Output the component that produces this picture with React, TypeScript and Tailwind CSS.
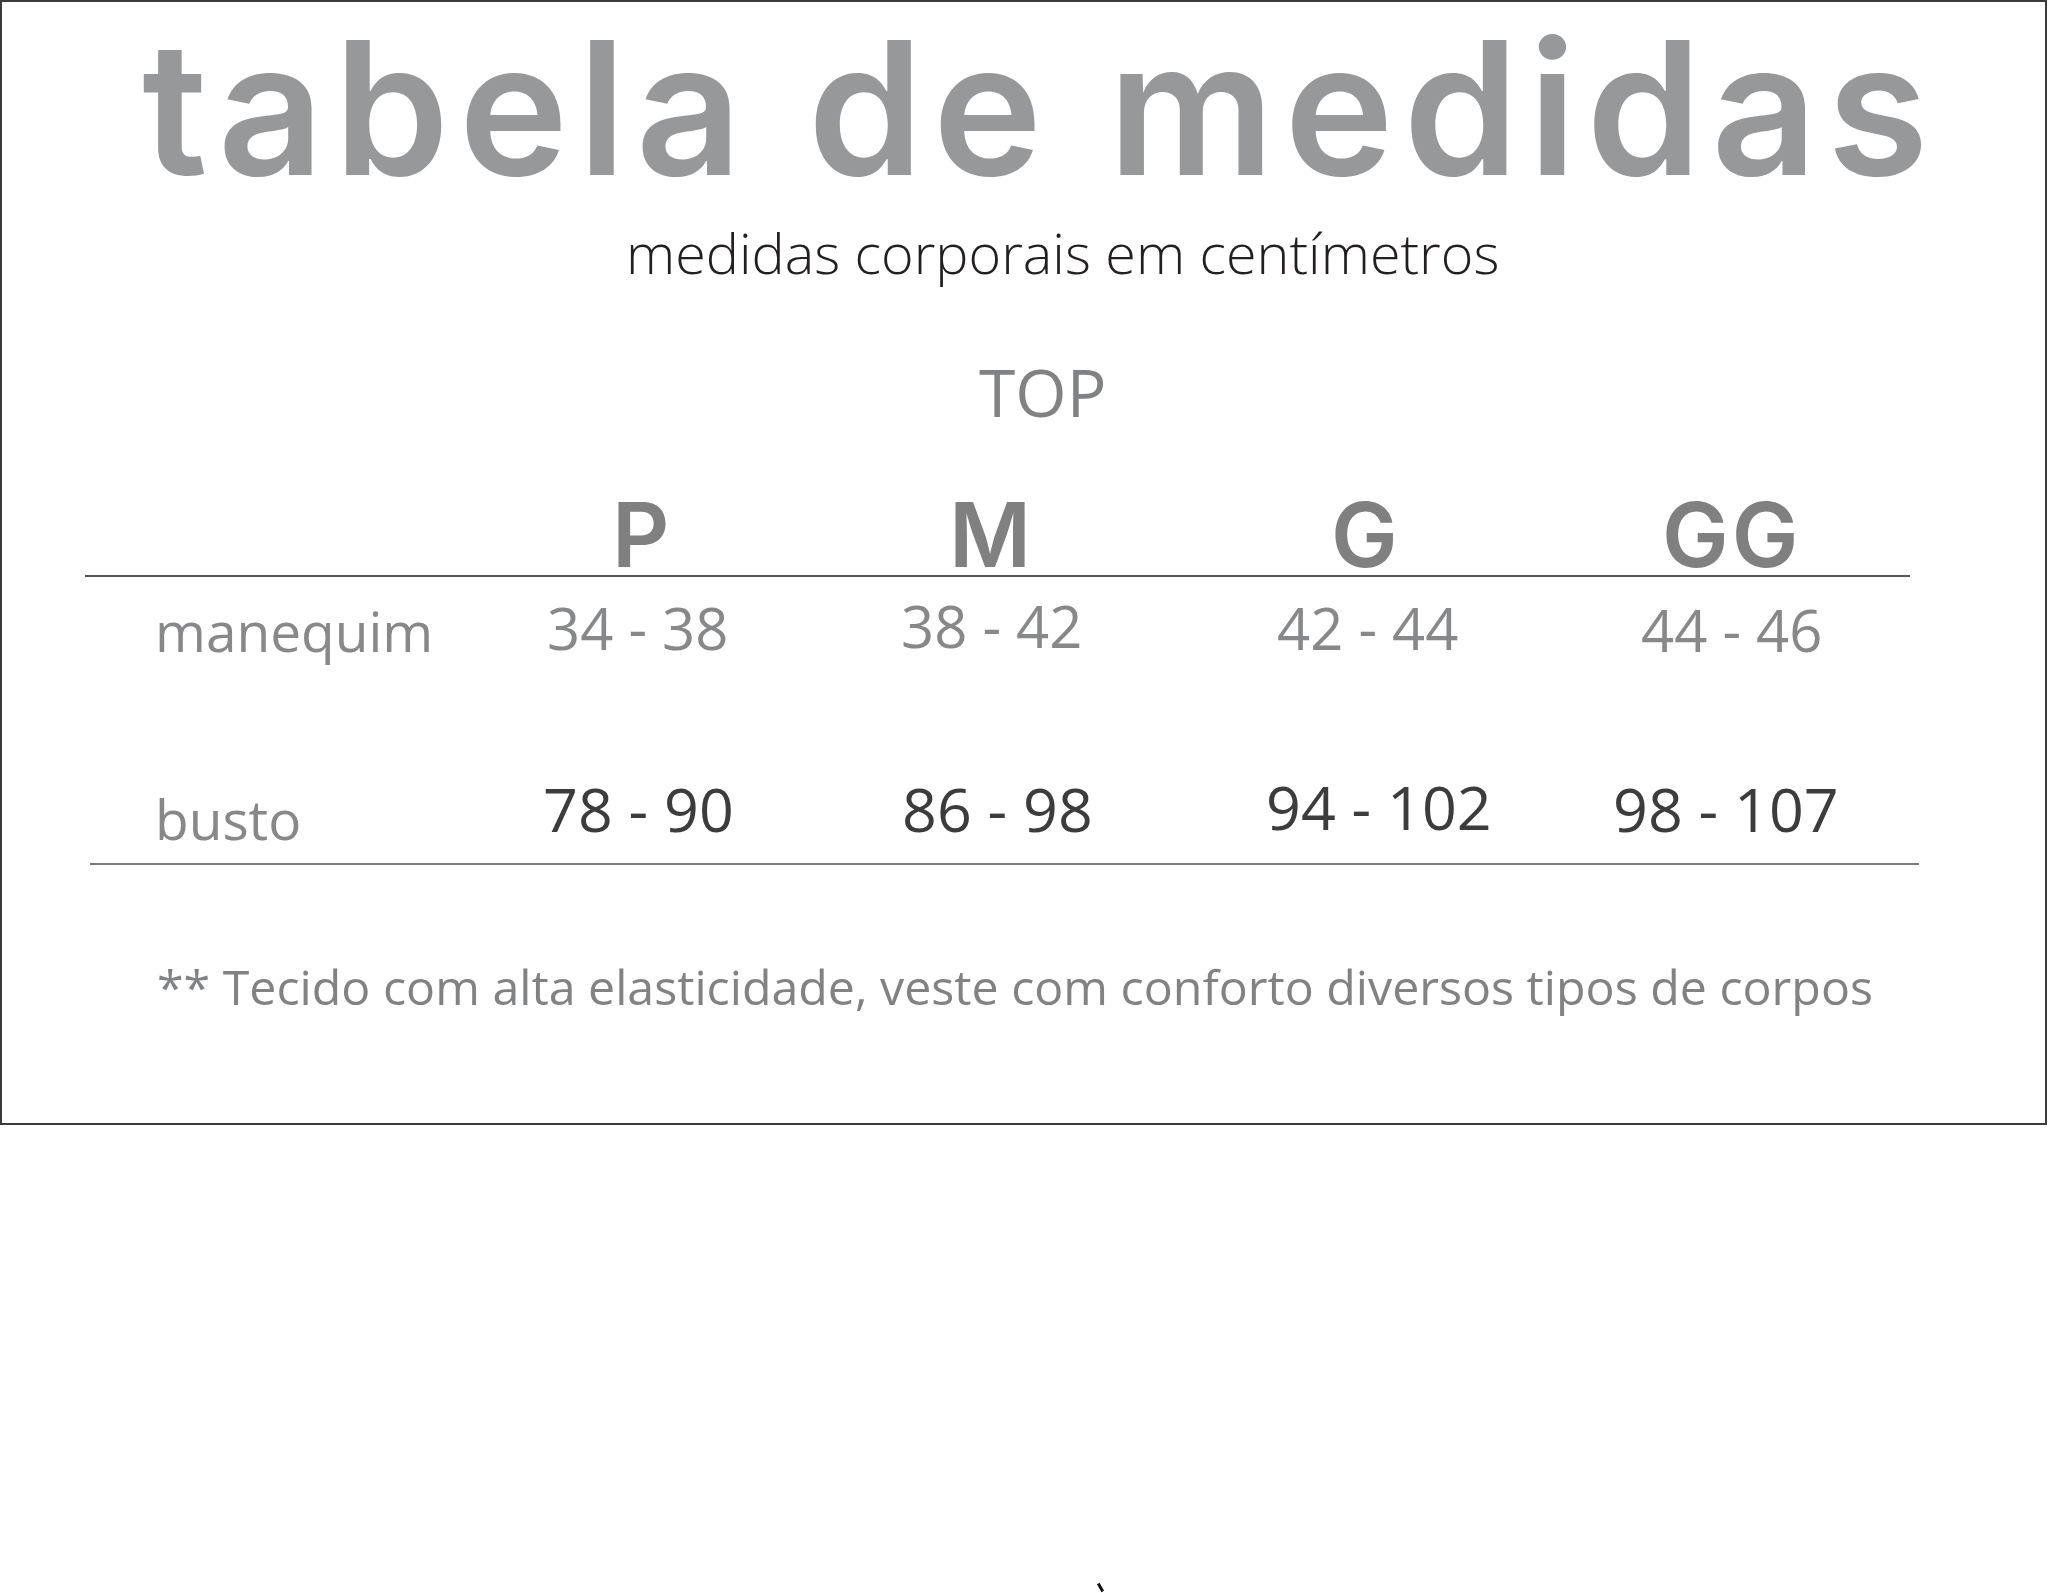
import React from 'react';

type Row = { label: string; values: { text: string; pl: string; pt: string }[] };

const sizes = [
  { label: 'P', pl: 'pl-[82px]' },
  { label: 'M', pl: 'pl-[69px]' },
  { label: 'G', pl: 'pl-[91px]' },
  { label: 'GG', pl: 'pl-[62px]' },
];

const manequim: Row = {
  label: 'manequim',
  values: [
    { text: '34 - 38', pl: 'pl-[17px]', pt: 'pt-[2px]' },
    { text: '38 - 42', pl: 'pl-[21px]', pt: 'pt-0' },
    { text: '42 - 44', pl: 'pl-[37px]', pt: 'pt-[2px]' },
    { text: '44 - 46', pl: 'pl-[41px]', pt: 'pt-[4px]' },
  ],
};

const busto: Row = {
  label: 'busto',
  values: [
    { text: '78 - 90', pl: 'pl-[13px]', pt: 'pt-[2px]' },
    { text: '86 - 98', pl: 'pl-[22px]', pt: 'pt-[2px]' },
    { text: '94 - 102', pl: 'pl-[26px]', pt: 'pt-0' },
    { text: '98 - 107', pl: 'pl-[13px]', pt: 'pt-[2px]' },
  ],
};

const gridCols = 'grid grid-cols-[445px_350px_360px_360px_310px]';

export default function App() {
  return (
    <div className="min-h-[1593px] w-[2048px] bg-white">
      <div className="w-[2047px] h-[1125px] border-2 border-[#3b3b3b] flex flex-col">
        {/* titulo */}
        <div className="mt-[14px] pl-[140px] font-['Inter',sans-serif] text-[185px] leading-none font-semibold tracking-[9.6px] text-[#97989a] whitespace-nowrap">
          tabela de medidas
        </div>

        <div className="mt-[24px] pl-[624px] font-['Open_Sans',sans-serif] text-[55.7px] leading-none font-light text-[#231f20] whitespace-nowrap">
          medidas corporais em centímetros
        </div>

        <div className="mt-[77px] pl-[977px] font-['Open_Sans',sans-serif] text-[66px] leading-none text-[#818284]">
          TOP
        </div>

        {/* cabecalho de tamanhos */}
        <div className={`mt-[66px] ml-[83px] w-[1825px] h-[87px] border-b-2 border-[#555557] ${gridCols}`}>
          <div />
          {sizes.map((s) => (
            <div
              key={s.label}
              className={`${s.pl} font-['Inter',sans-serif] text-[89px] leading-none font-semibold tracking-[3px] text-[#808080]`}
            >
              {s.label}
            </div>
          ))}
        </div>

        {/* manequim */}
        <div className={`mt-[20px] ml-[83px] w-[1825px] h-[179px] items-start ${gridCols} font-['Open_Sans',sans-serif]`}>
          <div className="pl-[70px] pt-[6px] text-[55px] leading-none text-[#87888a]">{manequim.label}</div>
          {manequim.values.map((v) => (
            <div key={v.text} className={`${v.pl} ${v.pt} text-[58px] leading-none text-[#87888a] whitespace-nowrap`}>
              {v.text}
            </div>
          ))}
        </div>

        {/* busto */}
        <div className={`ml-[83px] w-[1825px] h-[87px] items-start ${gridCols} font-['Open_Sans',sans-serif]`}>
          <div className="pl-[70px] pt-[15px] text-[55px] leading-none text-[#87888a]">{busto.label}</div>
          {busto.values.map((v) => (
            <div key={v.text} className={`${v.pl} ${v.pt} text-[61px] leading-none text-[#3c3c3e] whitespace-nowrap`}>
              {v.text}
            </div>
          ))}
        </div>

        <div className="ml-[88px] w-[1829px] h-[2px] bg-[#7a7a7c]" />

        <div className="mt-[97px] pl-[155px] font-['Open_Sans',sans-serif] text-[48.3px] leading-none text-[#818284] whitespace-nowrap">
          ** Tecido com alta elasticidade, veste com conforto diversos tipos de corpos
        </div>
      </div>

      {/* marca solta no rodape */}
      <div className="pt-[458px] pl-[1099px]">
        <div className="w-[3px] h-[9px] bg-[#111] -rotate-[30deg]" />
      </div>
    </div>
  );
}
